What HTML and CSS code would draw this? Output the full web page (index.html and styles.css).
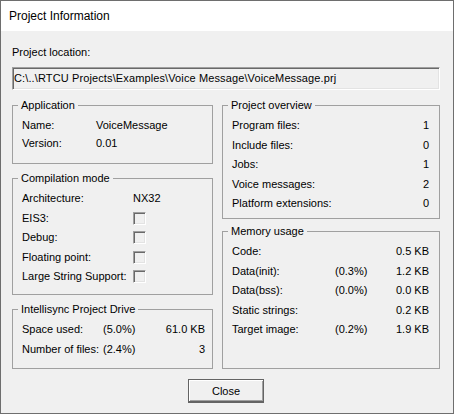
FILE: index.html
```html
<!DOCTYPE html>
<html lang="en">
<head>
    <meta charset="UTF-8">
    <title>Project Information</title>
    <link rel="stylesheet" href="styles.css">
</head>
<body>
    <div class="window">
        <div class="titlebar">Project Information</div>

        <div class="client">
            <div class="loc-label">Project location:</div>
            <div class="path-box">C:\..\RTCU Projects\Examples\Voice Message\VoiceMessage.prj</div>

            <div class="columns">
                <div class="col col-left">
                    <div class="group group-app">
                        <span class="group-title">Application</span>
                        <div class="rows rows-app">
                            <span>Name:</span><span>VoiceMessage</span>
                            <span>Version:</span><span>0.01</span>
                        </div>
                    </div>

                    <div class="group group-comp">
                        <span class="group-title">Compilation mode</span>
                        <div class="rows rows-comp">
                            <span>Architecture:</span><span>NX32</span>
                            <span>EIS3:</span><span class="check"></span>
                            <span>Debug:</span><span class="check"></span>
                            <span>Floating point:</span><span class="check"></span>
                            <span>Large String Support:</span><span class="check"></span>
                        </div>
                    </div>

                    <div class="group group-drive">
                        <span class="group-title">Intellisync Project Drive</span>
                        <div class="rows rows-drive">
                            <span>Space used:</span><span>(5.0%)</span><span class="num">61.0 KB</span>
                            <span>Number of files:</span><span>(2.4%)</span><span class="num">3</span>
                        </div>
                    </div>
                </div>

                <div class="col col-right">
                    <div class="group group-overview">
                        <span class="group-title">Project overview</span>
                        <div class="rows rows-overview">
                            <span>Program files:</span><span class="num">1</span>
                            <span>Include files:</span><span class="num">0</span>
                            <span>Jobs:</span><span class="num">1</span>
                            <span>Voice messages:</span><span class="num">2</span>
                            <span>Platform extensions:</span><span class="num">0</span>
                        </div>
                    </div>

                    <div class="group group-memory">
                        <span class="group-title">Memory usage</span>
                        <div class="rows rows-memory">
                            <span>Code:</span><span></span><span class="num">0.5 KB</span>
                            <span>Data(init):</span><span>(0.3%)</span><span class="num">1.2 KB</span>
                            <span>Data(bss):</span><span>(0.0%)</span><span class="num">0.0 KB</span>
                            <span>Static strings:</span><span></span><span class="num">0.2 KB</span>
                            <span>Target image:</span><span>(0.2%)</span><span class="num">1.9 KB</span>
                        </div>
                    </div>
                </div>
            </div>

            <div class="buttons">
                <button class="btn-close">Close</button>
            </div>
        </div>
    </div>
</body>
</html>
```

FILE: styles.css
```css
body {
    margin: 0;
    font-family: "Liberation Sans", Arial, sans-serif;
    font-size: 11px;
    color: #000;
    background: #f0f0f0;
}

.window {
    width: 454px;
    height: 414px;
    box-sizing: border-box;
    border: 1px solid #6e6e6e;
    display: flex;
    flex-direction: column;
}

.titlebar {
    height: 30px;
    line-height: 30px;
    padding-left: 8px;
    background: #fff;
    font-size: 12px;
}

.client {
    flex: 1;
    background: #f0f0f0;
    padding: 15px 13px 10px 11px;
    display: flex;
    flex-direction: column;
}

.loc-label {
    line-height: 13px;
    margin-bottom: 8px;
}

.path-box {
    height: 23px;
    box-sizing: border-box;
    line-height: 21px;
    padding-left: 1px;
    border: 1px solid;
    border-color: #a0a0a0 #fff #fff #a0a0a0;
    box-shadow: inset 1px 1px #696969, inset -1px -1px #e3e3e3;
    white-space: nowrap;
    letter-spacing: 0.12px;
}

.columns {
    display: flex;
    gap: 9px;
    margin-top: 15px;
}

.col {
    display: flex;
    flex-direction: column;
}

.col-left {
    width: 201px;
    gap: 14px;
}

.col-right {
    width: 218px;
    gap: 12px;
}

.group {
    position: relative;
    box-sizing: border-box;
    border: 1px solid #a0a0a0;
    padding: 10px 10px 0 9px;
}

.group-title {
    position: absolute;
    top: -7px;
    left: 5px;
    padding: 0 3px;
    line-height: 13px;
    background: #f0f0f0;
}

.group-app { height: 59px; padding-right: 7px; }
.group-comp { height: 117px; padding-right: 7px; }
.group-drive { height: 60px; padding-right: 7px; }
.group-overview { height: 114px; }
.group-memory { height: 138px; }

.rows {
    display: grid;
    grid-auto-rows: 19.5px;
    align-items: center;
    line-height: 13px;
    white-space: nowrap;
}

.rows-app {
    grid-template-columns: 74px 1fr;
    grid-auto-rows: 18.6px;
}

.rows-comp {
    grid-template-columns: 111px 1fr;
}

.rows-drive {
    grid-template-columns: 81px auto 1fr;
}

.rows-overview {
    grid-template-columns: 1fr auto;
}

.rows-memory {
    grid-template-columns: 103px auto 1fr;
}

.num {
    text-align: right;
}

.check {
    width: 13px;
    height: 13px;
    box-sizing: border-box;
    border: 1px solid;
    border-color: #a0a0a0 #fff #fff #a0a0a0;
    box-shadow: inset 1px 1px #696969, inset -1px -1px #e3e3e3;
    background: #f0f0f0;
}

.buttons {
    display: flex;
    justify-content: center;
    margin-top: 10px;
}

.btn-close {
    width: 76px;
    height: 24px;
    box-sizing: border-box;
    font-family: "Liberation Sans", Arial, sans-serif;
    font-size: 11px;
    color: #000;
    background: #f0f0f0;
    border: 1px solid #646464;
    border-bottom-width: 2px;
    box-shadow: inset 1px 1px #fff, inset -1px -1px #a0a0a0;
    padding: 0;
}
```
